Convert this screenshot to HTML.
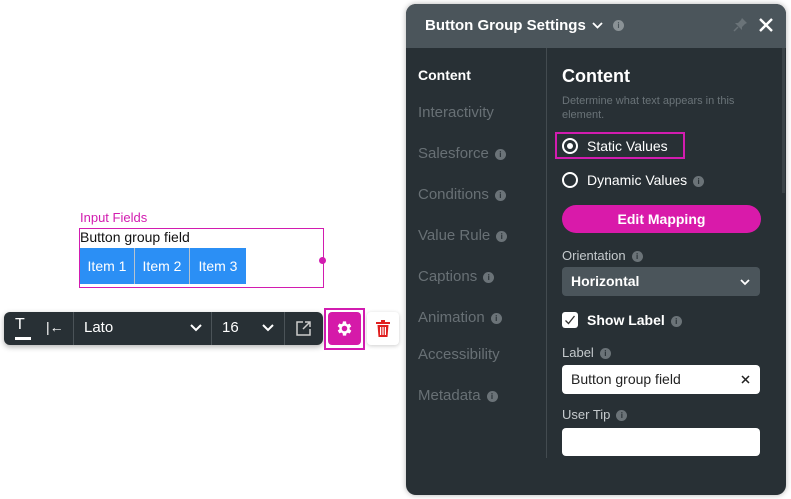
<!DOCTYPE html>
<html><head><meta charset="utf-8"><style>
*{box-sizing:border-box;margin:0;padding:0}
body{width:791px;height:499px;background:#fff;position:relative;overflow:hidden;font-family:"Liberation Sans",sans-serif}
.a{position:absolute}
.info{display:inline-block;width:11px;height:11px;border-radius:50%;background:#6b7378;color:#283035;font-size:8px;font-weight:bold;text-align:center;line-height:11px;vertical-align:middle;margin-left:6px}
.nav{position:absolute;left:418px;font-size:15px;color:#687075}
.lbl{position:absolute;left:562px;font-size:13px;color:#c5cacd}
</style></head><body>
<div class="a" style="left:80px;top:210px;font-size:13px;color:#d21cb0">Input Fields</div>
<div class="a" style="left:79px;top:228px;width:245px;height:60px;border:1px solid #d21cb0"></div>
<div class="a" style="left:80px;top:229px;font-size:14px;color:#111">Button group field</div>
<div class="a" style="left:80px;top:248px;width:166px;height:36px;background:#2b8ff5;display:flex;color:#fff;font-size:14px">
<div style="width:55px;text-align:center;line-height:36px;border-right:1px solid #b7c3cf">Item 1</div>
<div style="width:55px;text-align:center;line-height:36px;border-right:1px solid #b7c3cf">Item 2</div>
<div style="width:56px;text-align:center;line-height:36px">Item 3</div></div>
<div class="a" style="left:319px;top:257px;width:7px;height:7px;border-radius:50%;background:#d21cb0"></div>
<div class="a" style="left:4px;top:312px;width:319px;height:33px;background:#283035;border-radius:6px;box-shadow:0 2px 6px rgba(0,0,0,.3);color:#fff">
<div class="a" style="left:11px;top:4px;font-size:16px">T</div>
<div class="a" style="left:11px;top:25px;width:16px;height:3px;background:#fff"></div>
<div class="a" style="left:42px;top:7px;font-size:14px">|←</div>
<div class="a" style="left:69px;top:0;width:1px;height:33px;background:#4b5358"></div>
<div class="a" style="left:80px;top:7px;font-size:15px">Lato</div>
<svg class="a" style="left:186px;top:12px" width="12" height="8" viewBox="0 0 12 8" fill="none" stroke="#fff" stroke-width="2"><path d="M1 1L6 6L11 1"/></svg>
<div class="a" style="left:207px;top:0;width:1px;height:33px;background:#4b5358"></div>
<div class="a" style="left:218px;top:7px;font-size:15px">16</div>
<svg class="a" style="left:258px;top:12px" width="12" height="8" viewBox="0 0 12 8" fill="none" stroke="#fff" stroke-width="2"><path d="M1 1L6 6L11 1"/></svg>
<div class="a" style="left:280px;top:0;width:1px;height:33px;background:#4b5358"></div>
<svg class="a" style="left:292px;top:9px" width="15" height="15" viewBox="0 0 15 15" fill="none" stroke="#ccc" stroke-width="1.5"><path d="M7 1H1V14H14V8M9 1H14V6M14 1L7 8"/></svg>
</div>
<div class="a" style="left:324px;top:308px;width:41px;height:42px;border:2px solid #d21cb0;background:#fff"></div>
<div class="a" style="left:328px;top:312px;width:33px;height:33px;background:#d51aa9;border-radius:4px">
<svg class="a" style="left:7px;top:7px" width="19" height="19" viewBox="0 0 24 24" fill="#fff"><path d="M19.4 13a7.5 7.5 0 000-2l2.1-1.6-2-3.5-2.5 1a7.6 7.6 0 00-1.7-1L15 3h-4l-.4 2.7a7.6 7.6 0 00-1.7 1l-2.5-1-2 3.5L6.6 11a7.5 7.5 0 000 2l-2.1 1.6 2 3.5 2.5-1a7.6 7.6 0 001.7 1L11 21h4l.4-2.7a7.6 7.6 0 001.7-1l2.5 1 2-3.5zM13 15.5a3.5 3.5 0 110-7 3.5 3.5 0 010 7z" transform="translate(-1 0)"/></svg></div>
<div class="a" style="left:367px;top:312px;width:32px;height:33px;background:#fff;border-radius:4px;box-shadow:0 1px 4px rgba(0,0,0,.2)">
<svg class="a" style="left:9px;top:8px" width="14" height="17" viewBox="0 0 14 17" fill="#e02020"><rect x="0" y="2" width="14" height="2"/><rect x="5" y="0" width="4" height="2"/><path d="M1.5 5H12.5L11.5 17H2.5Z"/><rect x="4" y="7" width="1.2" height="8" fill="#fff"/><rect x="6.4" y="7" width="1.2" height="8" fill="#fff"/><rect x="8.8" y="7" width="1.2" height="8" fill="#fff"/></svg></div>

<div class="a" style="left:406px;top:4px;width:380px;height:491px;background:#283035;border-radius:10px;overflow:hidden;box-shadow:0 0 6px rgba(0,0,0,.3)">
<div class="a" style="left:0;top:0;width:380px;height:44px;background:#4b555b"></div>
<div class="a" style="left:19px;top:13px;font-size:15px;font-weight:bold;color:#fff">Button Group Settings</div>
<svg class="a" style="left:186px;top:18px" width="11" height="7" viewBox="0 0 11 7" fill="none" stroke="#fff" stroke-width="1.8"><path d="M1 1L5.5 5.5L10 1"/></svg>
<span class="info a" style="left:207px;top:16px;background:#8a9296;color:#4b555b;margin:0">i</span>
<svg class="a" style="left:327px;top:13px" width="15" height="15" viewBox="0 0 15 15" fill="#6a7378"><path d="M9 1L14 6L12 7L9 10L9 13L2 6L5 6L8 3Z"/><path d="M5 10L1 14" stroke="#6a7378" stroke-width="1.5"/></svg>
<svg class="a" style="left:352px;top:13px" width="16" height="16" viewBox="0 0 16 16" stroke="#fff" stroke-width="2.4"><path d="M2 2L14 14M14 2L2 14"/></svg>
<div class="a" style="left:140px;top:44px;width:1px;height:410px;background:#434b50"></div>
<div class="a" style="left:376px;top:44px;width:3px;height:145px;background:#3a4247"></div>
</div>
<div class="nav" style="top:67px;color:#fff;font-weight:bold;font-size:14px">Content</div>
<div class="nav" style="top:104px">Interactivity</div>
<div class="nav" style="top:145px">Salesforce<span class="info">i</span></div>
<div class="nav" style="top:186px">Conditions<span class="info">i</span></div>
<div class="nav" style="top:227px">Value Rule<span class="info">i</span></div>
<div class="nav" style="top:268px">Captions<span class="info">i</span></div>
<div class="nav" style="top:309px">Animation<span class="info">i</span></div>
<div class="nav" style="top:346px">Accessibility</div>
<div class="nav" style="top:387px">Metadata<span class="info">i</span></div>
<div class="a" style="left:562px;top:66px;font-size:18px;font-weight:bold;color:#fff">Content</div>
<div class="a" style="left:562px;top:94px;width:200px;font-size:11px;line-height:14px;color:#6a7378">Determine what text appears in this element.</div>
<div class="a" style="left:555px;top:132px;width:130px;height:27px;border:2px solid #d21cb0"></div>
<div class="a" style="left:562px;top:138px;width:16px;height:16px;border-radius:50%;border:2px solid #fff"></div>
<div class="a" style="left:567px;top:143px;width:6px;height:6px;border-radius:50%;background:#fff"></div>
<div class="a" style="left:587px;top:138px;font-size:14px;color:#fff">Static Values</div>
<div class="a" style="left:562px;top:172px;width:16px;height:16px;border-radius:50%;border:2px solid #fff"></div>
<div class="a" style="left:587px;top:172px;font-size:14px;color:#fff">Dynamic Values<span class="info">i</span></div>
<div class="a" style="left:562px;top:205px;width:199px;height:28px;border-radius:14px;background:#d91aaa;color:#fff;font-size:14px;font-weight:bold;text-align:center;line-height:28px">Edit Mapping</div>
<div class="lbl" style="top:248px">Orientation<span class="info">i</span></div>
<div class="a" style="left:562px;top:267px;width:198px;height:29px;border-radius:4px;background:#4b555b;color:#fff;font-size:14px;font-weight:bold;line-height:29px;padding-left:9px">Horizontal</div>
<svg class="a" style="left:740px;top:279px" width="10" height="7" viewBox="0 0 10 7" fill="none" stroke="#fff" stroke-width="1.8"><path d="M1 1L5 5L9 1"/></svg>
<div class="a" style="left:562px;top:312px;width:16px;height:16px;border-radius:3px;background:#fff"></div>
<svg class="a" style="left:564px;top:314px" width="12" height="12" viewBox="0 0 12 12" fill="none" stroke="#333" stroke-width="1.3"><path d="M1.5 6.5L4.5 9.5L10.5 2"/></svg>
<div class="a" style="left:587px;top:312px;font-size:14px;font-weight:bold;color:#fff">Show Label<span class="info">i</span></div>
<div class="lbl" style="top:345px">Label<span class="info">i</span></div>
<div class="a" style="left:562px;top:365px;width:198px;height:29px;border-radius:4px;background:#fff;font-size:14px;color:#222;line-height:29px;padding-left:9px">Button group field</div>
<svg class="a" style="left:741px;top:375px" width="9" height="9" viewBox="0 0 9 9" stroke="#222" stroke-width="1.5"><path d="M1 1L8 8M8 1L1 8"/></svg>
<div class="lbl" style="top:407px">User Tip<span class="info">i</span></div>
<div class="a" style="left:562px;top:428px;width:198px;height:28px;border-radius:4px;background:#fff"></div>
</body></html>
